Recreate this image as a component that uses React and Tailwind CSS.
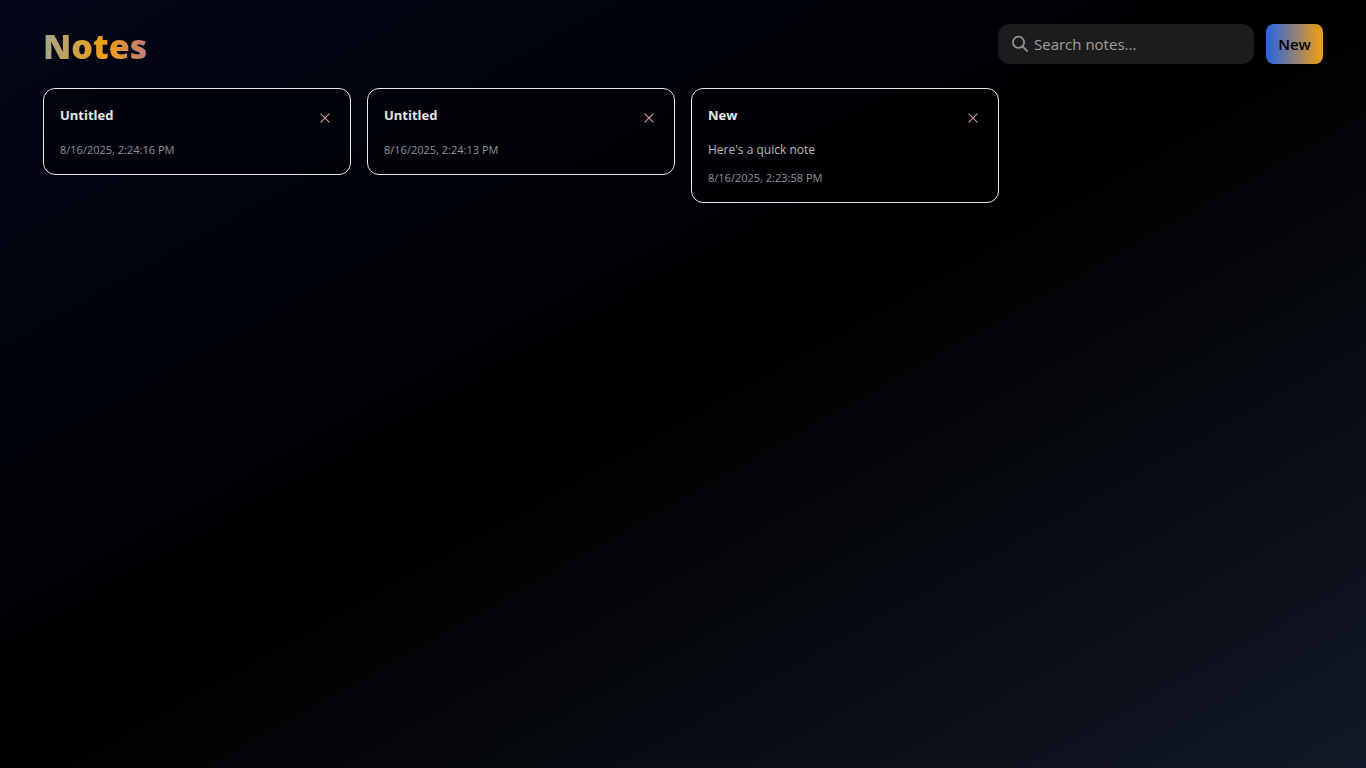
import { useState } from "react";

const initialNotes = [
  { id: 3, title: "Untitled", body: "", date: "8/16/2025, 2:24:16 PM" },
  { id: 2, title: "Untitled", body: "", date: "8/16/2025, 2:24:13 PM" },
  { id: 1, title: "New", body: "Here's a quick note", date: "8/16/2025, 2:23:58 PM" },
];

function SearchIcon() {
  return (
    <svg className="size-5 shrink-0 text-[#8e8e90]" viewBox="0 0 20 20" fill="none" stroke="currentColor" strokeWidth="1.8" strokeLinecap="round" aria-hidden="true">
      <circle cx="8.5" cy="8.3" r="5.6" />
      <path d="M12.8 12.6 L17.2 17" />
    </svg>
  );
}

function NoteCard({ note, onDelete }) {
  return (
    <article className="rounded-xl border border-gray-200 bg-black/30 p-4">
      <div className="flex items-start justify-between">
        <h2 className="text-[13px] leading-5 font-bold text-gray-200">{note.title}</h2>
        <button type="button" aria-label={"Delete " + note.title} onClick={() => onDelete(note.id)} className="flex h-[25px] w-[18px] items-center justify-center text-[#dc9a9f]">
          <svg className="size-3" viewBox="0 0 12 12" fill="none" stroke="currentColor" strokeWidth="1.1" aria-hidden="true">
            <path d="M1.6 1.6 L10.4 10.4 M10.4 1.6 L1.6 10.4" />
          </svg>
        </button>
      </div>
      {note.body && <p className="mt-2 text-xs leading-6 text-[#bcbcbc]">{note.body}</p>}
      <p className={note.body ? "mt-2 text-[11px] leading-4 text-[#939498]" : "mt-3 text-[11px] leading-4 text-[#939498]"}>{note.date}</p>
    </article>
  );
}

export default function App() {
  const [notes, setNotes] = useState(initialNotes);
  const [query, setQuery] = useState("");
  const shown = notes.filter((n) => (n.title + " " + n.body).toLowerCase().includes(query.toLowerCase()));
  const addNote = () =>
    setNotes([{ id: Date.now(), title: "Untitled", body: "", date: new Date().toLocaleString("en-US") }, ...notes]);

  return (
    <div className="min-h-screen bg-linear-to-br/srgb from-[#020617] via-black to-[#111827] py-6 font-['Open_Sans','Noto_Sans',sans-serif]">
      <div className="mx-auto max-w-7xl">
        <header className="mb-6 flex items-start justify-between">
          <h1 className="bg-linear-to-r/srgb from-[#a3a78b] via-[#f59e0b] via-60% to-[#c07c80] bg-clip-text pt-1 font-['Noto_Sans','Open_Sans',sans-serif] text-[34px] leading-9 font-black text-transparent">Notes</h1>
          <div className="flex items-center gap-3">
            <label className="flex h-10 w-64 items-center gap-1 rounded-xl bg-[#1c1c1d] px-3">
              <SearchIcon />
              <input type="text" aria-label="Search notes" placeholder="Search notes..." value={query} onChange={(e) => setQuery(e.target.value)} className="min-w-0 flex-1 bg-transparent text-[15px] text-gray-200 outline-none placeholder:text-[#a0a0a0]" />
            </label>
            <button type="button" onClick={addNote} className="h-10 w-[57px] rounded-lg bg-linear-to-r/srgb from-[#2563eb] to-[#f59e0b] text-[15px] font-semibold text-black">New</button>
          </div>
        </header>
        <main className="grid grid-cols-1 items-start gap-4 sm:grid-cols-2 lg:grid-cols-4">
          {shown.map((note) => (
            <NoteCard key={note.id} note={note} onDelete={(id) => setNotes(notes.filter((n) => n.id !== id))} />
          ))}
        </main>
      </div>
    </div>
  );
}
